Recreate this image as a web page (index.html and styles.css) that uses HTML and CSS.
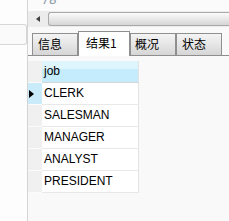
FILE: index.html
```html
<!DOCTYPE html>
<html>
<head>
<meta charset="utf-8">
<link rel="stylesheet" href="styles.css">
</head>
<body>
<div class="app">
  <div class="left">
    <div class="leftbtn"></div>
  </div>
  <div class="sep"></div>
  <div class="main">
    <div class="top"><span class="num">78</span></div>
    <div class="hscroll">
      <div class="arrow"></div>
      <div class="thumb"></div>
    </div>
    <div class="tabs">
      <div class="tab t1">信息</div>
      <div class="tab active">结果1</div>
      <div class="tab t3">概况</div>
      <div class="tab t4">状态</div>
    </div>
    <div class="grid">
      <div class="row head"><div class="ind"></div><div class="cell">job</div></div>
      <div class="row sel"><div class="ind"><span class="tri"></span></div><div class="cell">CLERK</div></div>
      <div class="row"><div class="ind"></div><div class="cell">SALESMAN</div></div>
      <div class="row"><div class="ind"></div><div class="cell">MANAGER</div></div>
      <div class="row"><div class="ind"></div><div class="cell">ANALYST</div></div>
      <div class="row"><div class="ind"></div><div class="cell">PRESIDENT</div></div>
    </div>
  </div>
</div>
</body>
</html>
```
FILE: styles.css
```css
html, body { margin: 0; padding: 0; }
body {
  width: 229px;
  height: 221px;
  overflow: hidden;
  font-family: "Liberation Sans", Arial, sans-serif;
  font-size: 12px;
  background: #fafafa;
}
.app { display: flex; height: 221px; }
.left {
  width: 27px;
  background: #fdfdfd;
  padding-top: 24px;
  box-sizing: border-box;
}
.leftbtn {
  height: 19px;
  border: 1px solid #d6d6d6;
  border-left: none;
  border-radius: 0 3px 3px 0;
  background: #fafafa;
}
.sep { width: 1px; background: #d4d4d4; }
.main { flex: 1; display: flex; flex-direction: column; background: #f9f9f9; min-width: 0; }
.top {
  height: 11px;
  overflow: hidden;
  background: #fbfbfb;
  padding-left: 14px;
}
.num {
  display: block;
  margin-top: -8px;
  font-size: 13px;
  line-height: 16px;
  color: #8797a8;
  font-style: italic;
}
.hscroll {
  height: 16px;
  background: #ececec;
  display: flex;
  align-items: center;
}
.arrow {
  width: 0; height: 0;
  border-top: 3px solid transparent;
  border-bottom: 3px solid transparent;
  border-right: 4px solid #404040;
  margin-left: 8px;
  margin-right: 8px;
}
.thumb {
  flex: 1;
  height: 14px;
  box-sizing: border-box;
  border: 1px solid #a9a9a9;
  border-right: none;
  border-radius: 3px 0 0 3px;
  background: linear-gradient(#fbfbfb, #e8e8e8 50%, #d6d6d6);
}
.tabs {
  display: flex;
  align-items: flex-end;
  height: 24px;
  margin-top: 4px;
  padding-left: 4px;
  border-bottom: 1px solid #8e8e8e;
  background: #f9f9f9;
}
.tab {
  box-sizing: border-box;
  height: 22px;
  width: 46px;
  border: 1px solid #8f8f8f;
  border-bottom: none;
  padding-left: 5px;
  font-family: "Noto Sans CJK SC", sans-serif;
  font-size: 12px;
  line-height: 20px;
  color: #000;
  background: linear-gradient(#f4f4f4, #e4e4e4 55%, #d6d6d6);
}
.tab.active {
  width: 52px;
  height: 25px;
  margin-bottom: -1px;
  background: #ffffff;
  padding-left: 7px;
  line-height: 22px;
}
.tab.t3 { width: 46px; padding-left: 4px; }
.tab.t4 { margin-left: 0; }
.grid { margin-top: 5px; }
.row { display: flex; height: 22px; }
.ind {
  width: 14px;
  box-sizing: border-box;
  background: #f0f0f0;
  border-bottom: 1px solid #fbfbfb;
  display: flex;
  align-items: center;
  padding-left: 1px;
}
.cell {
  width: 97px;
  box-sizing: border-box;
  background: #ffffff;
  border-bottom: 1px solid #e8e8e8;
  border-right: 1px solid #e3e3e3;
  padding-left: 2px;
  line-height: 21px;
  color: #000;
}
.head .cell {
  background: linear-gradient(#dff5fd 0, #dff5fd 8px, #c5ecfc 8px, #c5ecfc 100%);
  border-bottom: 1px solid #d6d6d6;
}
.sel .ind { background: #c9ebfa; }
.tri {
  width: 0; height: 0;
  border-top: 4px solid transparent;
  border-bottom: 4px solid transparent;
  border-left: 5px solid #000;
}
```
